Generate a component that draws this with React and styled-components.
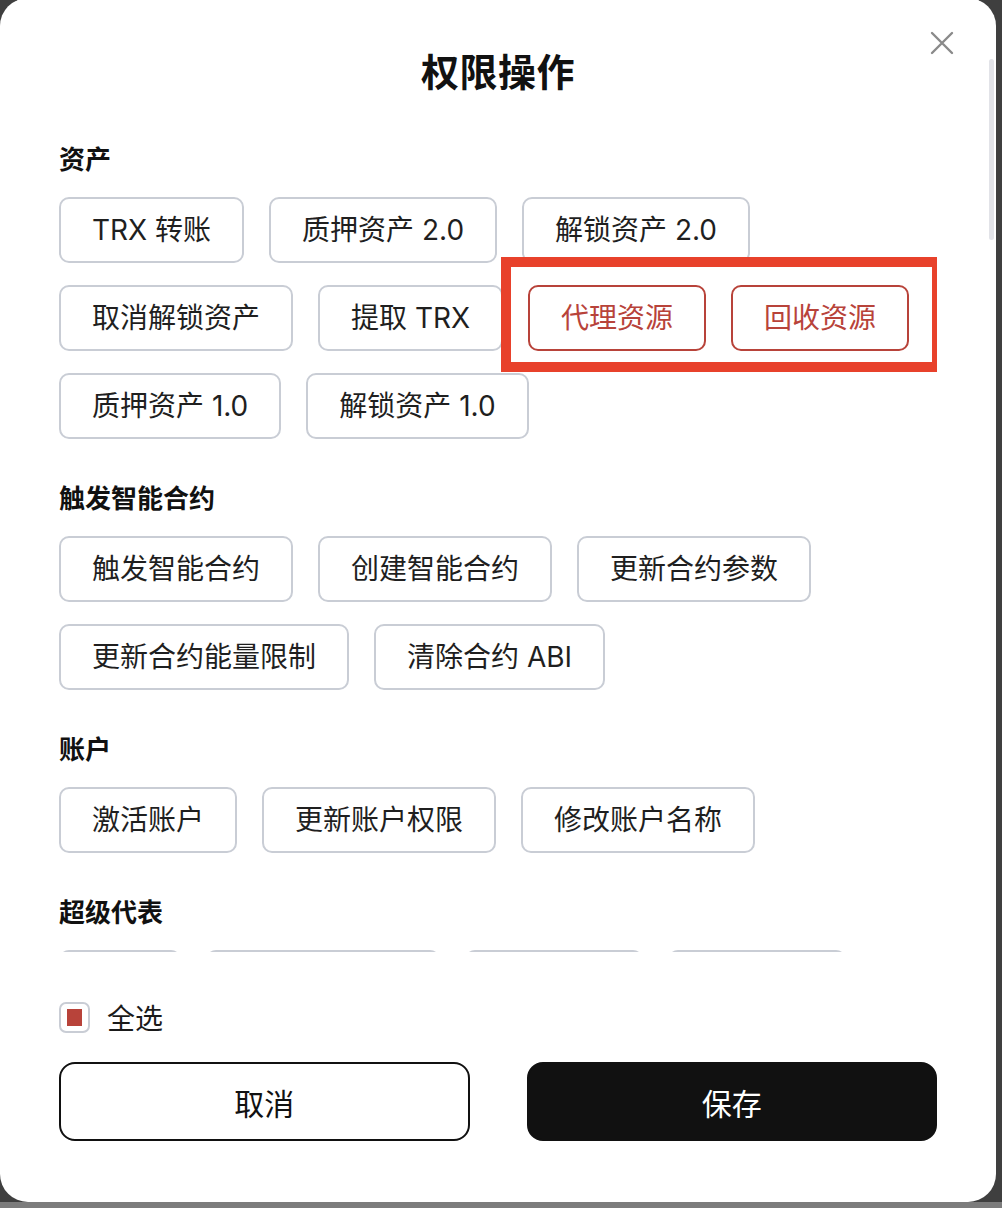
import React, { useState } from 'react';
import styled, { createGlobalStyle } from 'styled-components';

const GlobalStyle = createGlobalStyle`
  html, body {
    margin: 0;
    padding: 0;
    background: #3f3f3f;
  }
  body {
    font-family: Inter, "Noto Sans CJK SC", "Noto Sans", sans-serif;
    color: #1a1a1a;
  }
`;

const sections = [
  {
    title: '资产',
    items: [
      'TRX 转账',
      '质押资产 2.0',
      '解锁资产 2.0',
      '取消解锁资产',
      '提取 TRX',
      '代理资源',
      '回收资源',
      '质押资产 1.0',
      '解锁资产 1.0',
    ],
    marked: ['代理资源', '回收资源'],
  },
  {
    title: '触发智能合约',
    items: ['触发智能合约', '创建智能合约', '更新合约参数', '更新合约能量限制', '清除合约 ABI'],
  },
  {
    title: '账户',
    items: ['激活账户', '更新账户权限', '修改账户名称'],
  },
  {
    title: '超级代表',
    items: ['投票', '创建超级代表', '领取奖励', '更新分成'],
  },
];

const Page = styled.div`
  width: 1002px;
  height: 1208px;
  overflow: hidden;
  position: relative;
  background: linear-gradient(#3f3f3f 0 1202px, #7c7c7c 1202px);
`;

const Card = styled.div`
  position: relative;
  width: 996px;
  height: 1204px;
  margin-top: -2px;
  background: #fff;
  border-radius: 28px;
  box-sizing: border-box;
  padding: 0 59px;
  display: flex;
  flex-direction: column;
`;

const Header = styled.div`
  height: 144px;
  flex-shrink: 0;
  display: flex;
  align-items: center;
  justify-content: center;
  padding-bottom: 2px;
  box-sizing: border-box;
`;

const Title = styled.h1`
  margin: 0;
  font-size: 38px;
  font-weight: 700;
  color: #111;
  letter-spacing: 0.5px;
`;

const CloseButton = styled.button`
  position: absolute;
  top: 32px;
  right: 41px;
  width: 26px;
  height: 26px;
  padding: 0;
  border: none;
  background: none;
  cursor: pointer;
  display: flex;
  align-items: center;
  justify-content: center;
`;

const Scroll = styled.div`
  height: 810px;
  flex-shrink: 0;
  overflow: hidden;
`;

const Thumb = styled.div`
  position: absolute;
  right: 2px;
  top: 61px;
  width: 5px;
  height: 181px;
  border-radius: 3px;
  background: #e2e3e8;
`;

const Section = styled.section`
  margin-bottom: 42px;
`;

const SectionTitle = styled.h2`
  margin: 0 0 19px;
  font-size: 26px;
  line-height: 36px;
  font-weight: 700;
  color: #111;
`;

const Chips = styled.div`
  display: flex;
  flex-wrap: wrap;
  gap: 22px 25px;
  position: relative;
`;

const Chip = styled.button`
  height: 66px;
  margin: 0;
  padding: 0 31px;
  border: 2px solid ${(p) => (p.$active ? '#b8433a' : '#c9cdd5')};
  border-radius: 10px;
  background: #fff;
  color: ${(p) => (p.$active ? '#b8433a' : '#1f1f1f')};
  font-family: inherit;
  font-size: 28px;
  line-height: 1;
  white-space: nowrap;
  cursor: pointer;
`;

const Marker = styled.div`
  position: absolute;
  left: 442px;
  top: 60px;
  width: 441px;
  height: 115px;
  border: 10px solid #e8412b;
  box-sizing: border-box;
  pointer-events: none;
`;

const Footer = styled.div`
  display: flex;
  flex-direction: column;
  padding-top: 49px;
`;

const SelectAll = styled.label`
  display: flex;
  align-items: center;
  gap: 17px;
  font-size: 28px;
  color: #1a1a1a;
  cursor: pointer;
  height: 32px;
`;

const Box = styled.span`
  width: 31px;
  height: 31px;
  box-sizing: border-box;
  border: 2px solid #c9cdd5;
  border-radius: 7px;
  display: flex;
  align-items: center;
  justify-content: center;
`;

const Fill = styled.span`
  width: 15px;
  height: 17px;
  background: #b8433a;
`;

const Actions = styled.div`
  display: grid;
  grid-template-columns: 1fr 1fr;
  gap: 57px;
  margin-top: 29px;
`;

const ActionButton = styled.button`
  height: 79px;
  border-radius: 16px;
  border: 2px solid #111;
  background: ${(p) => (p.$primary ? '#111' : '#fff')};
  color: ${(p) => (p.$primary ? '#fff' : '#111')};
  font-family: inherit;
  font-size: 30px;
  cursor: pointer;
`;

export default function App() {
  const [all, setAll] = useState(true);

  return (
    <Page>
      <GlobalStyle />
      <Card>
        <Header>
          <Title>权限操作</Title>
        </Header>
        <CloseButton aria-label="close">
          <svg width="24" height="24" viewBox="0 0 24 24">
            <path d="M2 2 L22 22 M22 2 L2 22" stroke="#8a8a8a" strokeWidth="2.4" strokeLinecap="round" />
          </svg>
        </CloseButton>
        <Thumb />
        <Scroll>
          {sections.map((s) => (
            <Section key={s.title}>
              <SectionTitle>{s.title}</SectionTitle>
              <Chips>
                {s.items.map((it) => (
                  <Chip key={it} $active={s.marked && s.marked.includes(it)}>
                    {it}
                  </Chip>
                ))}
                {s.marked && <Marker />}
              </Chips>
            </Section>
          ))}
        </Scroll>
        <Footer>
          <SelectAll onClick={() => setAll(!all)}>
            <Box>{all && <Fill />}</Box>
            全选
          </SelectAll>
          <Actions>
            <ActionButton>取消</ActionButton>
            <ActionButton $primary>保存</ActionButton>
          </Actions>
        </Footer>
      </Card>
    </Page>
  );
}
